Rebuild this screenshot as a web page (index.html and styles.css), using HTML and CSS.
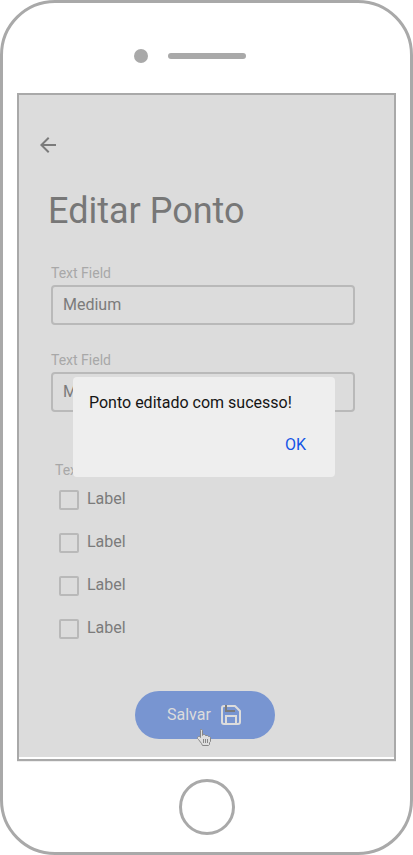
FILE: index.html
```html
<!DOCTYPE html>
<html lang="pt-BR">
<head>
<meta charset="utf-8">
<title>Editar Ponto</title>
<link rel="stylesheet" href="styles.css">
</head>
<body>
<div class="phone">
  <div class="speaker-row"><span class="camera"></span><span class="speaker"></span></div>
  <div class="screen">
    <main class="page">
      <svg class="back" viewBox="0 0 24 24"><path d="M20 11H7.83l5.59-5.59L12 4l-8 8 8 8 1.41-1.41L7.83 13H20z"/></svg>
      <h1 class="title">Editar Ponto</h1>
      <div class="field"><div class="caption">Text Field</div><div class="input">Medium</div></div>
      <div class="field"><div class="caption">Text Field</div><div class="input">Medium</div></div>
      <div class="options">
        <div class="caption options-caption">Text Field</div>
        <div class="option"><span class="box"></span><span class="option-label">Label</span></div>
        <div class="option"><span class="box"></span><span class="option-label">Label</span></div>
        <div class="option"><span class="box"></span><span class="option-label">Label</span></div>
        <div class="option"><span class="box"></span><span class="option-label">Label</span></div>
      </div>
      <div class="save">
        <span class="save-label">Salvar</span>
        <svg class="disk" viewBox="0 0 24 24" fill="none" stroke="#dcdcdc" stroke-width="2" stroke-linejoin="round">
          <path d="M19 21H5a2 2 0 0 1-2-2V5a2 2 0 0 1 2-2h11l5 5v11a2 2 0 0 1-2 2z"/>
          <path d="M17 22v-9H7v9" stroke-linejoin="miter"/>
          <path d="M7 2v6h9" stroke="#7b7b7b" stroke-linejoin="miter"/>
        </svg>
        <svg class="cursor" viewBox="0 0 15 18">
          <path d="M3.5.5h1l1 1v5l1-1h1l1 1h2l1 1h1l1 1v4l-1 1v2l-1 1h-6l-1-2-3-4-1-1v-1l1-1h1l1 1v-7z" fill="#dedede" stroke="#888" stroke-width="1"/>
          <path d="M6.5 10v4M8.5 10v4M10.5 10v4" stroke="#888" fill="none"/>
        </svg>
      </div>
      <div class="dialog">
        <p class="message">Ponto editado com sucesso!</p>
        <span class="ok">OK</span>
      </div>
    </main>
  </div>
  <div class="home"></div>
</div>
</body>
</html>
```

FILE: styles.css
```css
* { box-sizing: border-box; margin: 0; }
body { background: #fff; font-family: Roboto, sans-serif; font-size: 16px; line-height: 20px; color: #7b7b7b; }
.phone { width: 413px; height: 855px; border: 3px solid #a9a9a9; border-radius: 55px; background: #fff; padding: 46px 14px 0; display: flex; flex-direction: column; }
.speaker-row { display: flex; align-items: center; gap: 20px; height: 14px; margin-left: 117px; }
.camera { width: 14px; height: 14px; border-radius: 50%; background: #a9a9a9; }
.speaker { width: 78px; height: 6px; border-radius: 3px; background: #a9a9a9; }
.screen { width: 379px; height: 668px; margin-top: 30px; border: 2px solid #a9a9a9; box-shadow: 0 1px 0 #eee; }
.page { position: relative; height: 662px; background: #dcdcdc; padding: 38px 0 0 17px; display: flex; flex-direction: column; align-items: flex-start; }
.back { width: 24px; height: 24px; fill: #7b7b7b; }
.title { margin: 32px 0 0 12px; font-size: 36px; line-height: 44px; font-weight: 400; color: #777; }
.field { margin: 32px 0 0 15px; }
.field + .field { margin-top: 27px; }
.caption { font-size: 14px; line-height: 16px; color: #a8a8a8; }
.input { width: 304px; height: 40px; margin-top: 4px; border: 2px solid #b9b9b9; border-radius: 4px; padding: 8px 10px; }
.options { margin: 50px 0 0 19px; }
.options-caption { margin-bottom: 12px; }
.option { display: flex; gap: 8px; margin: 0 0 23px 4px; }
.box { width: 20px; height: 20px; border: 2px solid #b9b9b9; border-radius: 2px; }
.option-label { line-height: 18px; }
.save { position: relative; display: flex; align-items: center; width: 140px; height: 48px; margin: 29px 0 0 99px; padding-left: 32px; border-radius: 24px; background: #7895d1; color: #dcdcdc; }
.save-label { width: 52px; }
.disk { width: 24px; height: 24px; }
.cursor { position: absolute; left: 62px; top: 38px; width: 15px; height: 18px; }
.dialog { position: absolute; left: 54px; top: 282px; width: 262px; height: 100px; border-radius: 4px; background: #eee; padding: 16px; display: flex; flex-direction: column; }
.message { color: #151515; }
.ok { align-self: flex-end; margin: 22px 13px 0 0; color: #1455e6; }
.home { width: 56px; height: 56px; margin: 18px 0 0 162px; border: 3px solid #a9a9a9; border-radius: 50%; }
```
